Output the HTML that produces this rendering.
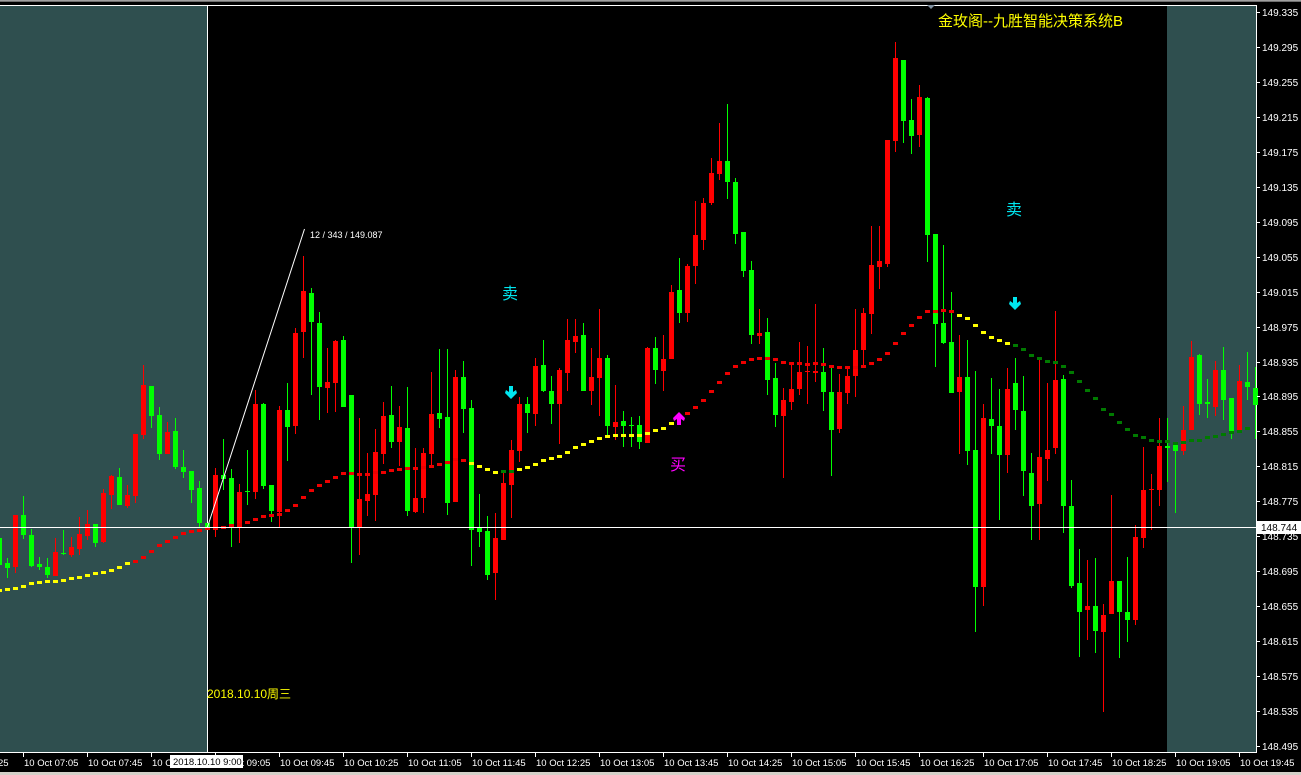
<!DOCTYPE html>
<html><head><meta charset="utf-8"><style>
html,body{margin:0;padding:0;background:#000;width:1301px;height:775px;overflow:hidden}
svg{display:block}
text{font-family:"Liberation Sans","Noto Sans CJK SC",sans-serif}
</style></head><body>
<svg id="s" width="1301" height="775" xmlns="http://www.w3.org/2000/svg">
<rect x="0" y="0" width="1301" height="775" fill="#000"/>
<rect x="0" y="0" width="1301" height="1" fill="#a0a0a0"/>
<rect x="0" y="1" width="1301" height="1" fill="#707070"/>
<rect x="0" y="5" width="1256" height="1" fill="#fff"/>
<rect x="0" y="6" width="207" height="746" fill="#2f4f4f"/>
<rect x="1167" y="6" width="89" height="746" fill="#2f4f4f"/>
<rect x="207" y="5" width="1" height="748" fill="#fff"/>
<rect x="1256" y="5" width="1" height="748" fill="#fff"/>
<rect x="0" y="752" width="1257" height="1" fill="#fff"/>
<rect x="0" y="772" width="1301" height="3" fill="#d4d0c8"/>
<g id="cd"></g>
<g id="dots"></g>
<rect x="0" y="527" width="1256" height="1" fill="#fff"/>
<line x1="207.5" y1="527" x2="304.5" y2="229" stroke="#fff" stroke-width="1"/>
<text x="310" y="238" font-size="9" fill="#fff">12 / 343 / 149.087</text>
<polygon points="927,5 935,5 931,9" fill="#8090a0"/>
<text x="938" y="26" font-size="15" fill="#ffff00">金玫阁--九胜智能决策系统B</text>
<text x="207" y="698" font-size="12" fill="#ffff00">2018.10.10周三</text>
<text x="502" y="299" font-size="16" fill="#00e5ee">卖</text>
<text x="1006" y="215" font-size="16" fill="#00e5ee">卖</text>
<text x="670" y="470" font-size="16" fill="#ff00ff">买</text>
<polygon points="509,386 513,386 513,392 516,390 517,393 511,399 505,393 506,390 509,392" fill="#00e5ee"/>
<polygon points="1013,297 1017,297 1017,303 1020,301 1021,304 1015,310 1009,304 1010,301 1013,303" fill="#00e5ee"/>
<polygon points="677,425 681,425 681,419 684,421 685,418 679,412 673,418 674,421 677,419" fill="#ff00ff"/>
<g id="ax"></g>
<rect x="1257" y="521" width="44" height="13" fill="#fff"/>
<text x="1261" y="531" font-size="10" fill="#000">148.744</text>
<rect x="170" y="755" width="73" height="13" fill="#fff"/>
<text x="173" y="765" font-size="9.5" fill="#000">2018.10.10 9:00</text>
</svg>
<script>
var C=[
[535,538,565,568,'g'],[558,563,568,578,'g'],[515,515,567,573,'r'],[496,515,535,539,'g'],[529,535,566,567,'g'],
[557,564,567,570,'g'],[558,567,575,578,'g'],[538,552,576,576,'r'],[530,553,554,555,'g'],[537,547,555,557,'r'],
[517,534,549,555,'r'],[510,524,536,540,'r'],[524,524,543,547,'g'],[489,493,542,543,'r'],[475,476,495,509,'r'],
[468,477,505,505,'g'],[485,495,506,508,'r'],[434,434,496,503,'r'],[365,385,435,439,'r'],[386,386,416,428,'g'],
[407,415,454,460,'g'],[422,432,454,454,'r'],[418,431,467,469,'g'],[450,467,472,478,'g'],[471,471,490,503,'g'],
[481,488,523,528,'g'],[523,523,527,527,'g'],[468,475,529,537,'r'],[439,475,479,490,'g'],[469,478,528,547,'g'],
[484,492,528,543,'r'],[450,491,492,505,'g'],[390,404,492,499,'r'],[403,404,486,489,'g'],[485,485,511,522,'g'],
[406,410,512,528,'r'],[383,410,427,461,'g'],[328,333,426,434,'r'],[256,291,332,358,'r'],[288,293,322,395,'g'],
[312,323,387,420,'g'],[348,382,388,413,'r'],[340,341,383,412,'r'],[336,340,407,407,'g'],[395,395,528,563,'g'],
[418,499,527,555,'r'],[453,494,501,516,'r'],[429,452,495,521,'r'],[402,416,454,464,'r'],[386,415,442,448,'g'],
[406,427,442,466,'r'],[387,428,511,516,'g'],[448,498,512,513,'r'],[448,453,498,513,'r'],[372,414,454,468,'r'],
[349,413,419,428,'g'],[349,417,503,515,'g'],[370,377,502,502,'r'],[361,377,409,433,'g'],[400,408,530,566,'g'],
[494,527,532,547,'g'],[516,531,575,580,'g'],[513,538,573,600,'r'],[470,483,540,540,'r'],[440,450,485,518,'r'],
[397,404,451,462,'r'],[397,404,413,433,'g'],[358,366,414,426,'r'],[340,365,391,392,'g'],[376,391,404,424,'g'],
[368,370,404,444,'r'],[319,340,373,391,'r'],[319,336,342,353,'r'],[323,335,391,391,'g'],[348,377,391,405,'r'],
[309,358,378,416,'r'],[355,358,426,437,'g'],[385,422,427,440,'r'],[411,421,426,447,'g'],[417,425,426,447,'g'],
[416,425,442,449,'g'],[347,348,443,443,'r'],[337,348,370,384,'g'],[335,359,371,391,'r'],[285,292,359,359,'r'],
[258,290,313,323,'g'],[264,266,313,322,'r'],[201,235,266,284,'r'],[198,203,240,250,'r'],[158,173,203,205,'r'],
[123,161,174,180,'r'],[104,161,182,199,'g'],[178,182,234,244,'g'],[232,232,271,277,'g'],[261,270,335,344,'g'],
[309,333,336,344,'r'],[318,332,380,395,'g'],[363,378,415,427,'g'],[388,400,416,478,'r'],[362,389,402,410,'r'],
[342,372,389,395,'r'],[346,371,372,404,'r'],[304,371,373,382,'r'],[348,372,392,411,'g'],[367,392,430,476,'g'],
[374,392,429,433,'r'],[367,376,393,404,'r'],[309,350,376,397,'r'],[308,313,350,367,'r'],[226,265,314,334,'r'],
[226,261,267,289,'r'],[140,140,264,267,'r'],[42,58,141,152,'r'],[60,60,121,143,'g'],[99,120,136,154,'g'],
[85,97,135,147,'r'],[97,98,235,262,'g'],[234,234,324,367,'g'],[245,323,343,344,'g'],[292,342,393,393,'g'],
[335,377,392,454,'r'],[340,377,451,465,'g'],[371,450,587,632,'g'],[404,418,587,606,'r'],[378,419,426,454,'g'],
[389,426,455,520,'g'],[368,389,455,473,'r'],[358,383,410,430,'g'],[376,411,471,496,'g'],[453,473,506,540,'g'],
[358,457,504,540,'r'],[383,450,459,481,'r'],[311,380,448,454,'r'],[375,379,506,533,'g'],[480,506,586,588,'g'],
[549,583,612,657,'g'],[560,606,610,640,'r'],[558,606,631,653,'g'],[604,615,632,712,'r'],[495,581,614,614,'r'],
[581,581,612,658,'g'],[557,612,620,642,'g'],[525,537,620,625,'r'],[447,490,538,548,'r'],[474,489,490,530,'r'],
[418,446,490,506,'r'],[418,446,448,482,'g'],[444,444,451,513,'g'],[406,430,451,455,'r'],[341,357,430,430,'r'],
[354,355,404,415,'g'],[379,402,404,418,'g'],[361,370,407,416,'r'],[347,370,400,420,'g'],[398,398,431,439,'g'],
[365,381,431,433,'r'],[352,382,387,400,'g'],[367,388,405,439,'g']];
var ns="http://www.w3.org/2000/svg";
function R(p,x,y,w,h,f){var r=document.createElementNS(ns,'rect');r.setAttribute('x',x);r.setAttribute('y',y);r.setAttribute('width',w);r.setAttribute('height',h);r.setAttribute('fill',f);p.appendChild(r);}
function T(p,x,y,s,f,t){var e=document.createElementNS(ns,'text');e.setAttribute('x',x);e.setAttribute('y',y);e.setAttribute('font-size',s);e.setAttribute('fill',f);e.textContent=t;p.appendChild(e);}
var cd=document.getElementById('cd');
C.forEach(function(c,i){var x=-1+8*i,f=c[4]=='r'?'#ff0000':'#00ff00';
R(cd,x,c[0],1,Math.max(1,c[3]-c[0]),f);R(cd,x-2,c[1],5,Math.max(1,c[2]-c[1]),f);});
// dots
var D=[590,589,588,586,583,582,581,581,580,578,577,575,573,572,570,567,563,561,557,551,545,541,537,533,531,530,528,528,527,525,524,522,519,516,515,514,510,505,497,490,485,481,477,473,473,474,474,472,472,470,469,468,468,467,466,464,462,459,460,463,466,469,472,471,471,469,467,464,460,458,456,452,447,444,441,438,436,435,435,435,435,433,430,428,423,418,413,407,400,391,382,373,366,362,359,358,358,359,362,363,363,364,363,364,366,367,367,367,366,363,359,353,343,333,325,317,311,311,310,311,315,318,325,332,337,340,343,345,349,355,358,361,362,366,372,381,390,398,409,414,422,429,435,437,440,441,441,443,442,440,440,437,436,434,432,431,428];
var dg=document.getElementById('dots');
D.forEach(function(y,i){var x=-1+8*i,col;
if(i<=16)col='#ffff00';else if(i<=58)col='#ee0000';else if(i<=62)col='#ffff00';else if(i<=64)col='#008000';else if(i<=84)col='#ffff00';else if(i<=119)col='#ee0000';else if(i<=126)col='#ffff00';else col='#007a00';
if(i==85)return;R(dg,x-2,y-1,5,3,col);});
// axis
var ax=document.getElementById('ax');
for(var k=0;k<22;k++){var p=(149.335-0.04*k).toFixed(3),y=Math.round(12+k*34.95);R(ax,1257,y,3,1,'#fff');T(ax,1262,y+4,10,'#fff',p);}
var tl=['07:05','07:45','08:25','09:05','09:45','10:25','11:05','11:45','12:25','13:05','13:45','14:25','15:05','15:45','16:25','17:05','17:45','18:25','19:05','19:45'];
T(ax,-2,766,9.5,'#fff','25');
tl.forEach(function(t,k){var x=23+64*k;R(ax,x,753,1,4,'#fff');T(ax,x+1,766,9.5,'#fff','10 Oct '+t);});
</script>
</body></html>
